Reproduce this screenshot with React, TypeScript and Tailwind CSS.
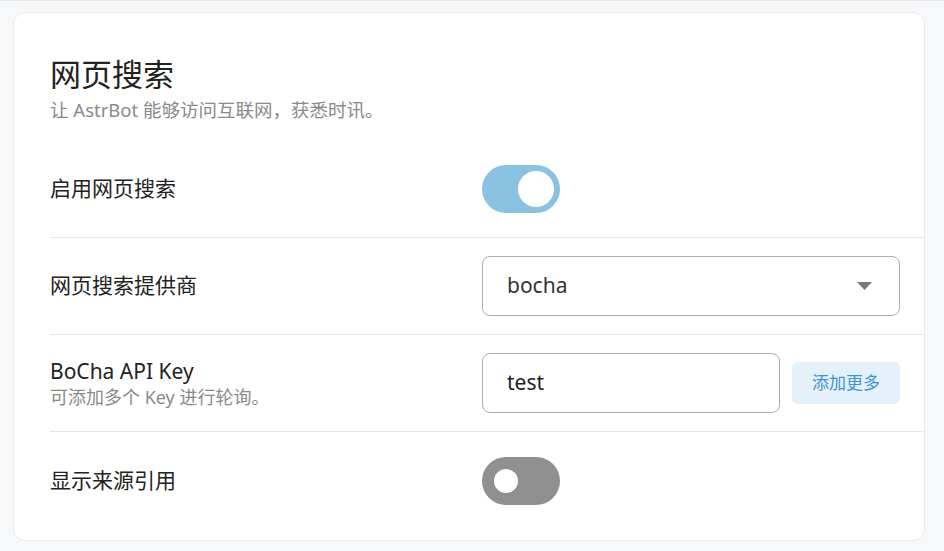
import React, { useState } from "react";

const font = { fontFamily: '"Noto Sans", "Noto Sans CJK SC", sans-serif' };

function Toggle({ on, onChange }: { on: boolean; onChange: () => void }) {
  return (
    <button
      type="button"
      onClick={onChange}
      className={`flex h-12 w-[78px] items-center rounded-full ${on ? "bg-[#8cc2e1]" : "bg-[#909090]"}`}
    >
      {on ? (
        <span className="ml-9 h-9 w-9 rounded-full bg-white" />
      ) : (
        <span className="ml-3 h-6 w-6 rounded-full bg-white" />
      )}
    </button>
  );
}

function Row({ children, last }: { children: React.ReactNode; last?: boolean }) {
  return (
    <div className={`flex h-[97px] items-center pr-6 ${last ? "" : "border-b border-[#e5e5e5]"}`}>
      {children}
    </div>
  );
}

export default function App() {
  const [search, setSearch] = useState(true);
  const [cite, setCite] = useState(false);

  return (
    <div className="min-h-[551px] border-t border-[#e6e7ea] bg-[#f7f8fa] pl-[13px] pr-[19px] pt-[11px] pb-[11px]" style={font}>
      <div className="rounded-xl border border-[#ebebed] bg-white pl-[36px] pt-[41px] pb-[11px]">
        {/* Header */}
        <h1 className="text-[31px] leading-[40px] text-[#222]">网页搜索</h1>
        <p className="mt-1 text-[18.5px] leading-6 text-[#8a8a8a]">让 AstrBot 能够访问互联网，获悉时讯。</p>

        <div className="mt-[19px]">
          <Row>
            <div className="w-[432px] text-[21px] text-[#222]">启用网页搜索</div>
            <Toggle on={search} onChange={() => setSearch(!search)} />
          </Row>

          <Row>
            <div className="w-[432px] text-[21px] text-[#222]">网页搜索提供商</div>
            <div className="flex h-[60px] flex-1 items-center justify-between rounded-lg border border-[#adadad] pl-6 pr-[27px]">
              <span className="text-[21px] text-[#333]">bocha</span>
              <svg width="15" height="8" viewBox="0 0 15 8">
                <path d="M0 0h15L7.5 8z" fill="#777" />
              </svg>
            </div>
          </Row>

          <Row>
            <div className="w-[432px]">
              <div className="text-[21px] leading-7 text-[#222]">BoCha API Key</div>
              <div className="text-[18px] leading-6 text-[#8a8a8a]">可添加多个 Key 进行轮询。</div>
            </div>
            <div className="flex flex-1 items-center gap-3">
              <div className="flex h-[60px] w-[298px] items-center rounded-lg border border-[#adadad] pl-6">
                <span className="text-[21px] text-[#222]">test</span>
              </div>
              <button type="button" className="h-[42px] flex-1 rounded-md bg-[#e5f1fa] text-[17px] text-[#3f93d2]">
                添加更多
              </button>
            </div>
          </Row>

          <Row last>
            <div className="w-[432px] text-[21px] text-[#222]">显示来源引用</div>
            <Toggle on={cite} onChange={() => setCite(!cite)} />
          </Row>
        </div>
      </div>
    </div>
  );
}
